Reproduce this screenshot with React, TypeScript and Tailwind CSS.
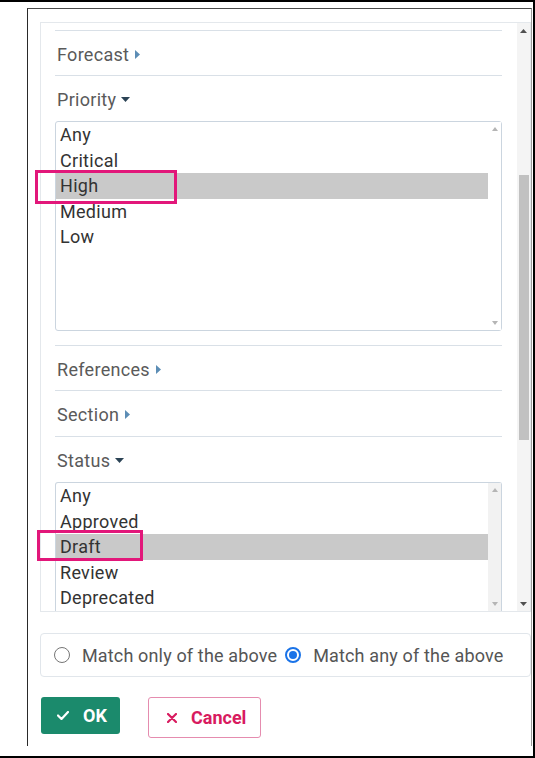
import React from "react";

const RightTri = () => (
  <svg width="5" height="9" viewBox="0 0 5 9" className="ml-[6px]">
    <path d="M0 0 L5 4.5 L0 9 Z" fill="#5c8db5" />
  </svg>
);

const DownTri = () => (
  <svg width="9" height="5" viewBox="0 0 9 5" className="ml-[5px]">
    <path d="M0 0 L9 0 L4.5 5 Z" fill="#2b4355" />
  </svg>
);

const Collapsed = ({ label, pb = "pb-[9px]" }: { label: string; pb?: string }) => (
  <div className={`border-t border-[#d9e0e7] pt-[11px] ${pb}`}>
    <div className="flex items-center h-6 pl-[2px] text-[18px] text-[#5a5a5a] tracking-[0.3px]">
      {label}
      <RightTri />
    </div>
  </div>
);

type Item = { label: string; sel?: boolean; mark?: { left: number; top: number; w: number; h: number } };

const ListBox = ({ items, h, track, bottomBorder = true }: { items: Item[]; h: string; track: string; bottomBorder?: boolean }) => (
  <div
    className={`flex ${h} border-t border-l border-r ${bottomBorder ? "border-b rounded-[3px]" : "rounded-t-[3px]"} border-[#cbd5df]`}
  >
    <div className="flex-1 flex flex-col">
      {items.map((it) => (
        <div
          key={it.label}
          className={`relative h-[25.5px] flex items-center pl-[4px] text-[18px] text-[#333333] tracking-[0.3px] ${
            it.sel ? "bg-[#c9c9c9]" : ""
          }`}
        >
          {it.label}
          {it.mark && (
            <div
              className="absolute border-[3px] border-[#e2177a]"
              style={{ left: it.mark.left, top: it.mark.top, width: it.mark.w, height: it.mark.h }}
            />
          )}
        </div>
      ))}
    </div>
    <div className={`w-[13px] flex flex-col items-center justify-between pt-[5px] pb-[5px] ${track}`}>
      <svg width="6" height="4" viewBox="0 0 6 4">
        <path d="M0 4 L3 0 L6 4 Z" fill="#b5b5b5" />
      </svg>
      <svg width="6" height="4" viewBox="0 0 6 4">
        <path d="M0 0 L6 0 L3 4 Z" fill="#b5b5b5" />
      </svg>
    </div>
  </div>
);

export default function App() {
  return (
    <div className="w-[535px] h-[758px] bg-white border-t-2 border-r-2 border-b-2 border-black pt-[6px] font-['Roboto',sans-serif]">
      <div className="ml-[27px] w-[505px] h-[738px] border-l border-t border-r border-l-[#2a2a2a] border-t-[#4a4a4a] border-r-[#9a9a9a] pl-[12px] pt-[13px]">
        {/* scroll panel */}
        <div className="flex h-[590px] border border-[#e4e8ec]">
          <div className="flex-1 pl-[14px] pr-[15px] pt-[7px]">
            <Collapsed label="Forecast" />
            <div className="border-t border-[#d9e0e7] pt-[11px] pb-[14px]">
              <div className="flex items-center h-6 pl-[2px] text-[18px] text-[#5a5a5a] tracking-[0.3px]">
                Priority
                <DownTri />
              </div>
              <div className="mt-[10px]">
                <ListBox
                  h="h-[210px]"
                  track="bg-white"
                  items={[
                    { label: "Any" },
                    { label: "Critical" },
                    { label: "High", sel: true, mark: { left: -21, top: -3, w: 142, h: 34 } },
                    { label: "Medium" },
                    { label: "Low" },
                  ]}
                />
              </div>
            </div>
            <Collapsed label="References" />
            <Collapsed label="Section" pb="pb-[10px]" />
            <div className="border-t border-[#d9e0e7] pt-[11px]">
              <div className="flex items-center h-6 pl-[2px] text-[18px] text-[#5a5a5a] tracking-[0.3px]">
                Status
                <DownTri />
              </div>
              <div className="mt-[10px]">
                <ListBox
                  h="h-[129px]"
                  track="bg-[#f2f2f2]"
                  bottomBorder={false}
                  items={[
                    { label: "Any" },
                    { label: "Approved" },
                    { label: "Draft", sel: true, mark: { left: -19, top: -4, w: 106, h: 31 } },
                    { label: "Review" },
                    { label: "Deprecated" },
                  ]}
                />
              </div>
            </div>
          </div>
          {/* panel scrollbar */}
          <div className="w-[13px] bg-[#f4f4f4] flex flex-col items-center pt-[6px] pb-[5px]">
            <svg width="7" height="4" viewBox="0 0 7 4">
              <path d="M0 4 L3.5 0 L7 4 Z" fill="#505050" />
            </svg>
            <div className="h-[142px]" />
            <div className="w-[10px] h-[265px] bg-[#c1c1c1]" />
            <div className="flex-1" />
            <svg width="7" height="4" viewBox="0 0 7 4">
              <path d="M0 0 L7 0 L3.5 4 Z" fill="#505050" />
            </svg>
          </div>
        </div>

        {/* radio group */}
        <div className="mt-[21px] h-[44px] border border-[#e1e6eb] rounded-[4px] flex items-center pl-[13px] text-[18px] text-[#555555] tracking-[0.15px]">
          <div className="w-4 h-4 rounded-full border border-[#767676] bg-white" />
          <span className="ml-[12px]">Match only of the above</span>
          <div className="ml-[8px] w-4 h-4 rounded-full border-2 border-[#1a73e8] flex items-center justify-center">
            <div className="w-[8px] h-[8px] rounded-full bg-[#1a73e8]" />
          </div>
          <span className="ml-[12px]">Match any of the above</span>
        </div>

        {/* buttons */}
        <div className="mt-[20px] flex items-start">
          <button className="ml-[1px] w-[79px] h-[37px] rounded-[3px] bg-[#1b8a6c] text-white font-bold text-[18px] flex items-center pl-[16px]">
            <svg width="12" height="9" viewBox="0 0 12 9">
              <path d="M1 4.5 L4.5 8 L11 1" stroke="white" strokeWidth="2.2" fill="none" strokeLinecap="round" strokeLinejoin="round" />
            </svg>
            <span className="ml-[14px]">OK</span>
          </button>
          <button className="ml-[28px] w-[113px] h-[41px] rounded-[3px] border border-[#e58caf] bg-white text-[#d81b5f] font-bold text-[18px] flex items-center pl-[18px]">
            <svg width="10" height="10" viewBox="0 0 10 10">
              <path d="M1 1 L9 9 M9 1 L1 9" stroke="#d81b5f" strokeWidth="2.2" strokeLinecap="round" />
            </svg>
            <span className="ml-[14px]">Cancel</span>
          </button>
        </div>
      </div>
    </div>
  );
}
